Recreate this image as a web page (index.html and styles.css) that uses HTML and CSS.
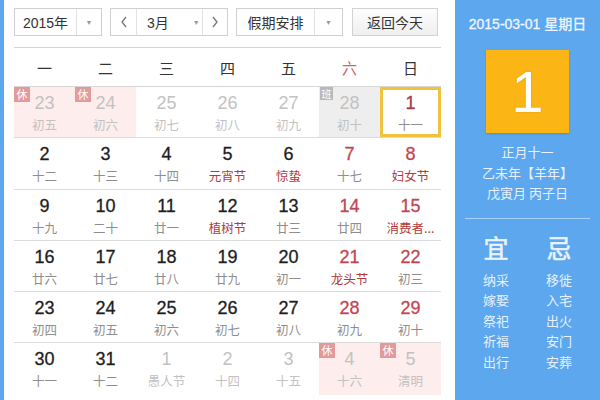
FILE: index.html
```html
<!DOCTYPE html>
<html>
<head>
<meta charset="utf-8">
<link rel="stylesheet" href="styles.css">
</head>
<body>
<div class="app">
  <div class="edge"></div>
  <main class="cal">
    <div class="toolbar">
      <div class="select year"><span class="sel-text">2015年</span><span class="sel-arrow">▼</span></div>
      <div class="select month">
        <span class="nav"><svg width="8" height="12" viewBox="0 0 8 12"><polyline points="6,1 2,6 6,11" fill="none" stroke="#777" stroke-width="1.3"/></svg></span>
        <span class="mid"><span class="m-text">3月</span><span class="m-arrow">▼</span></span>
        <span class="nav next"><svg width="8" height="12" viewBox="0 0 8 12"><polyline points="2,1 6,6 2,11" fill="none" stroke="#777" stroke-width="1.3"/></svg></span>
      </div>
      <div class="select holiday"><span class="sel-text">假期安排</span><span class="sel-arrow">▼</span></div>
      <div class="btn">返回今天</div>
    </div>
    <div class="weekdays">
      <span>一</span><span>二</span><span>三</span><span>四</span><span>五</span><span class="wk-sat">六</span><span>日</span>
    </div>
    <div class="grid">
      <div class="cell other rest"><span class="badge">休</span><span class="num">23</span><span class="lun">初五</span></div>
      <div class="cell other rest"><span class="badge">休</span><span class="num">24</span><span class="lun">初六</span></div>
      <div class="cell other"><span class="num">25</span><span class="lun">初七</span></div>
      <div class="cell other"><span class="num">26</span><span class="lun">初八</span></div>
      <div class="cell other"><span class="num">27</span><span class="lun">初九</span></div>
      <div class="cell other work"><span class="badge ban">班</span><span class="num">28</span><span class="lun">初十</span></div>
      <div class="cell today"><span class="num">1</span><span class="lun">十一</span></div>

      <div class="cell"><span class="num">2</span><span class="lun">十二</span></div>
      <div class="cell"><span class="num">3</span><span class="lun">十三</span></div>
      <div class="cell"><span class="num">4</span><span class="lun">十四</span></div>
      <div class="cell"><span class="num">5</span><span class="lun fest">元宵节</span></div>
      <div class="cell"><span class="num">6</span><span class="lun fest">惊蛰</span></div>
      <div class="cell wkend"><span class="num">7</span><span class="lun">十七</span></div>
      <div class="cell wkend"><span class="num">8</span><span class="lun fest">妇女节</span></div>

      <div class="cell"><span class="num">9</span><span class="lun">十九</span></div>
      <div class="cell"><span class="num">10</span><span class="lun">二十</span></div>
      <div class="cell"><span class="num">11</span><span class="lun">廿一</span></div>
      <div class="cell"><span class="num">12</span><span class="lun fest">植树节</span></div>
      <div class="cell"><span class="num">13</span><span class="lun">廿三</span></div>
      <div class="cell wkend"><span class="num">14</span><span class="lun">廿四</span></div>
      <div class="cell wkend"><span class="num">15</span><span class="lun fest">消费者...</span></div>

      <div class="cell"><span class="num">16</span><span class="lun">廿六</span></div>
      <div class="cell"><span class="num">17</span><span class="lun">廿七</span></div>
      <div class="cell"><span class="num">18</span><span class="lun">廿八</span></div>
      <div class="cell"><span class="num">19</span><span class="lun">廿九</span></div>
      <div class="cell"><span class="num">20</span><span class="lun">初一</span></div>
      <div class="cell wkend"><span class="num">21</span><span class="lun fest">龙头节</span></div>
      <div class="cell wkend"><span class="num">22</span><span class="lun">初三</span></div>

      <div class="cell"><span class="num">23</span><span class="lun">初四</span></div>
      <div class="cell"><span class="num">24</span><span class="lun">初五</span></div>
      <div class="cell"><span class="num">25</span><span class="lun">初六</span></div>
      <div class="cell"><span class="num">26</span><span class="lun">初七</span></div>
      <div class="cell"><span class="num">27</span><span class="lun">初八</span></div>
      <div class="cell wkend"><span class="num">28</span><span class="lun">初九</span></div>
      <div class="cell wkend"><span class="num">29</span><span class="lun">初十</span></div>

      <div class="cell last"><span class="num">30</span><span class="lun">十一</span></div>
      <div class="cell last"><span class="num">31</span><span class="lun">十二</span></div>
      <div class="cell last other"><span class="num">1</span><span class="lun">愚人节</span></div>
      <div class="cell last other"><span class="num">2</span><span class="lun">十四</span></div>
      <div class="cell last other"><span class="num">3</span><span class="lun">十五</span></div>
      <div class="cell last other rest"><span class="badge">休</span><span class="num">4</span><span class="lun">十六</span></div>
      <div class="cell last other rest"><span class="badge">休</span><span class="num">5</span><span class="lun">清明</span></div>
    </div>
  </main>
  <aside class="side">
    <div class="side-date">2015-03-01 星期日</div>
    <div class="big-day">1</div>
    <div class="side-lunar">
      <div>正月十一</div>
      <div>乙未年【羊年】</div>
      <div>戊寅月 丙子日</div>
    </div>
    <div class="side-rule"></div>
    <div class="yiji">
      <div class="yj-head">宜</div>
      <div class="yj-head">忌</div>
      <div class="yj-col">
        <span>纳采</span><span>嫁娶</span><span>祭祀</span><span>祈福</span><span>出行</span>
      </div>
      <div class="yj-col">
        <span>移徙</span><span>入宅</span><span>出火</span><span>安门</span><span>安葬</span>
      </div>
    </div>
  </aside>
</div>
</body>
</html>
```
FILE: styles.css
```css
* { box-sizing: border-box; }
html, body { margin: 0; padding: 0; }
body {
  width: 600px;
  height: 400px;
  overflow: hidden;
  font-family: "Liberation Sans", "Noto Sans CJK SC", sans-serif;
  background: #fff;
}
.app {
  display: flex;
  width: 600px;
  height: 400px;
}
.edge {
  width: 4px;
  background: #5da7ee;
}
.cal {
  width: 451px;
  background: #fff;
  padding: 8px 0 0 10px;
}
.toolbar {
  display: flex;
  height: 28px;
  font-size: 14px;
  color: #333;
}
.select {
  display: flex;
  height: 28px;
  border: 1px solid #cfcfcf;
  background: #fff;
  align-items: stretch;
}
.year { width: 88px; }
.month { width: 118px; margin-left: 8px; }
.holiday { width: 107px; margin-left: 8px; }
.sel-text {
  display: flex;
  align-items: center;
  justify-content: center;
  border-right: 1px solid #e2e2e2;
}
.year .sel-text { width: 62px; }
.holiday .sel-text { width: 78px; }
.sel-arrow, .m-arrow {
  flex: 1;
  display: flex;
  align-items: center;
  justify-content: center;
  font-size: 7px;
  color: #999;
}
.nav {
  width: 26px;
  display: flex;
  align-items: center;
  justify-content: center;
  border-right: 1px solid #e2e2e2;
}
.nav.next {
  border-right: none;
  border-left: 1px solid #e2e2e2;
  width: 25px;
}
.mid {
  flex: 1;
  display: flex;
  align-items: center;
}
.m-text { margin-left: 10px; }
.m-arrow { flex: none; margin-left: 24px; }
.btn {
  width: 86px;
  height: 28px;
  margin-left: 9px;
  border: 1px solid #d2d2d2;
  background: linear-gradient(#fdfdfd, #efefef);
  display: flex;
  align-items: center;
  justify-content: center;
  color: #333;
}
.weekdays {
  width: 427px;
  margin-top: 11px;
  border-top: 1px solid #c9d6e3;
  border-bottom: 1px solid #d6d6d6;
  display: grid;
  grid-template-columns: repeat(7, 61px);
  height: 40px;
  align-items: center;
  font-family: "Noto Sans CJK SC", sans-serif;
  font-size: 15px;
  color: #333;
  text-align: center;
}
.weekdays .wk-sat { color: #c46a6a; }
.grid {
  width: 427px;
  display: grid;
  grid-template-columns: repeat(7, 61px);
  grid-auto-rows: 51.25px;
}
.cell {
  position: relative;
  display: flex;
  flex-direction: column;
  align-items: center;
  padding-top: 6px;
  border-bottom: 1px solid #dcdcdc;
}
.cell.last { border-bottom: none; }
.num {
  font-size: 18px;
  line-height: 20px;
  color: #1e1e1e;
  -webkit-text-stroke: 0.3px #1e1e1e;
}
.lun {
  margin-top: 4px;
  font-family: "Noto Sans CJK SC", sans-serif;
  font-size: 12.5px;
  line-height: 16px;
  color: #8e8e8e;
}
.lun.fest { color: #b33a3a; }
.wkend .num { color: #c2464f; -webkit-text-stroke: 0.3px #c2464f; }
.other .num { color: #c2c2c2; -webkit-text-stroke: 0; }
.other .lun { color: #c2c2c2; }
.rest { background: #fdeded; }
.work { background: #eeeeee; }
.today {
  box-shadow: inset 0 0 0 3px #f0c33e;
}
.today .num { color: #a0404e; -webkit-text-stroke: 0.3px #a0404e; }
.badge {
  position: absolute;
  left: 0;
  top: 0;
  width: 16px;
  height: 15px;
  background: #e39a9a;
  color: #fff;
  font-family: "Noto Sans CJK SC", sans-serif;
  font-size: 11px;
  line-height: 15px;
  text-align: center;
}
.badge.ban {
  width: 13px;
  height: 13px;
  line-height: 13px;
  font-size: 10px;
  background: #b9b9b9;
  left: 1px;
}
.side {
  width: 145px;
  background: #5da7ee;
  display: flex;
  flex-direction: column;
  align-items: center;
  color: #eef6ff;
  font-family: "Liberation Sans", "Noto Sans CJK SC", sans-serif;
}
.side-date {
  margin-top: 15px;
  font-size: 14px;
  line-height: 18px;
  -webkit-text-stroke: 0.3px #eef6ff;
}
.big-day {
  margin-top: 17px;
  width: 83px;
  height: 83px;
  background: #fbb514;
  box-shadow: 0 1px 2px rgba(0,0,0,0.15);
  color: #fff;
  font-size: 58px;
  line-height: 83px;
  text-align: center;
  text-shadow: 0 0 2px rgba(0,0,0,0.15);
}
.side-lunar {
  margin-top: 9px;
  font-family: "Noto Sans CJK SC", sans-serif;
  font-size: 13px;
  line-height: 20.5px;
  text-align: center;
  color: #e6f1fd;
}
.side-rule {
  margin-top: 14px;
  width: 125px;
  height: 1px;
  background: #a9d1f6;
}
.yiji {
  margin-top: 13px;
  display: grid;
  grid-template-columns: 50px 50px;
  column-gap: 13px;
  text-align: center;
  font-family: "Noto Sans CJK SC", sans-serif;
}
.yj-head {
  font-size: 25px;
  line-height: 30px;
  color: #e9f3ff;
  -webkit-text-stroke: 0.6px #e9f3ff;
}
.yj-col {
  margin-top: 8px;
  display: flex;
  flex-direction: column;
  font-size: 13px;
  line-height: 20.5px;
  color: #e6f1fd;
}
```
